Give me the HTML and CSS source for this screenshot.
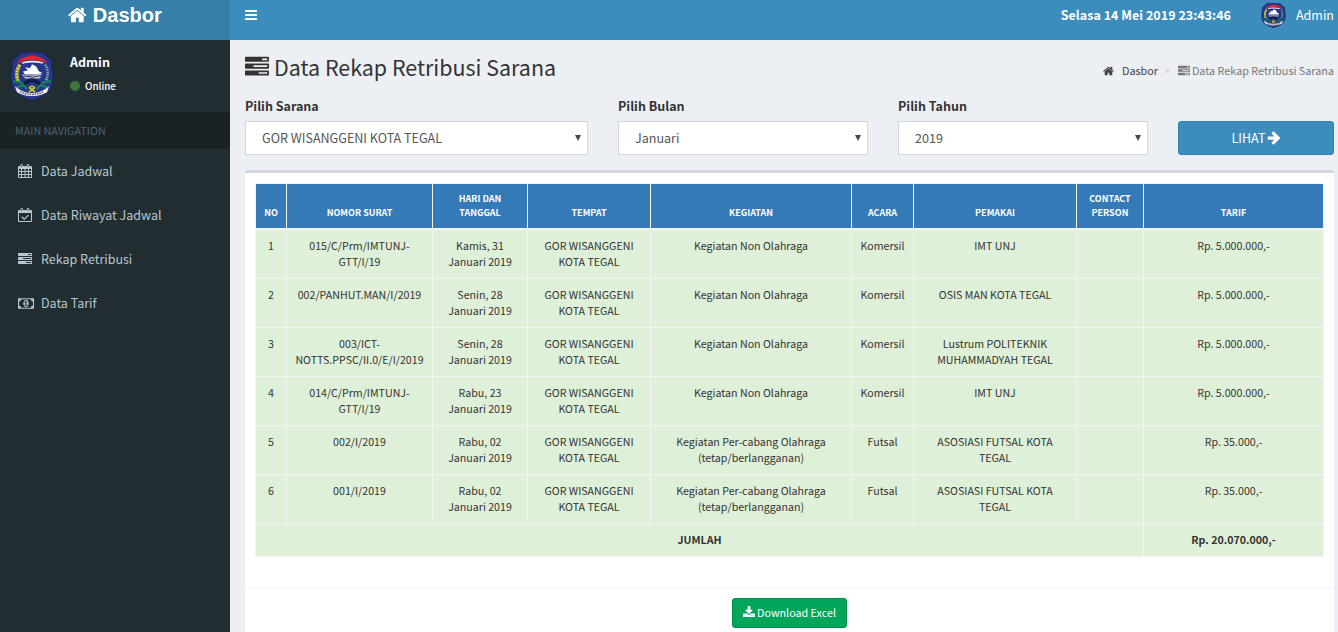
FILE: index.html
```html
<!DOCTYPE html>
<html lang="id">
<head>
<meta charset="utf-8">
<title>Data Rekap Retribusi Sarana</title>
<link rel="stylesheet" href="styles.css">
</head>
<body>
<svg class="sprite" aria-hidden="true">
  <symbol id="home" viewBox="64 0 1664 1792"><path d="M1472 992v480q0 26-19 45t-45 19h-384v-384h-256v384h-384q-26 0-45-19t-19-45v-480q0-1 .5-3t.5-3l575-474 575 474q1 2 1 6zm223-69l-62 74q-8 9-21 11h-3q-13 0-21-7l-692-577-692 577q-12 8-24 7-13-2-21-11l-62-74q-8-10-7-23.500t11-21.500l719-599q32-26 76-26t76 26l244 204v-195q0-14 9-23t23-9h192q14 0 23 9t9 23v408l219 182q10 8 11 21.500t-7 23.500z"/></symbol>
  <symbol id="bars" viewBox="128 0 1536 1792"><path d="M1664 1344v128q0 26-19 45t-45 19h-1408q-26 0-45-19t-19-45v-128q0-26 19-45t45-19h1408q26 0 45 19t19 45zm0-512v128q0 26-19 45t-45 19h-1408q-26 0-45-19t-19-45v-128q0-26 19-45t45-19h1408q26 0 45 19t19 45zm0-512v128q0 26-19 45t-45 19h-1408q-26 0-45-19t-19-45v-128q0-26 19-45t45-19h1408q26 0 45 19t19 45z"/></symbol>
  <symbol id="calendar" viewBox="0 0 14 14"><path fill-rule="evenodd" d="M1 2H2.500V1Q2.500 0 3.500 0Q4.800 0 4.800 1V2H8.800V1Q8.800 0 10 0Q11.200 0 11.200 1V2H13Q14 2 14 3V13Q14 14 13 14H1Q0 14 0 13V3Q0 2 1 2ZM1 5V7H3V5ZM4 5V7H6.500V5ZM7.500 5V7H10V5ZM11 5V7H13V5ZM1 8V10H3V8ZM4 8V10H6.500V8ZM7.500 8V10H10V8ZM11 8V10H13V8ZM1 11V13H3V11ZM4 11V13H6.500V11ZM7.500 11V13H10V11ZM11 11V13H13V11ZM3.300 1V3H4V1ZM9.700 1V3H10.400V1Z"/></symbol>
  <symbol id="calendar-check" viewBox="0 0 14 14"><path fill-rule="evenodd" d="M1 2H2.500V1Q2.500 0 3.500 0Q4.800 0 4.800 1V2H8.800V1Q8.800 0 10 0Q11.200 0 11.200 1V2H13Q14 2 14 3V13Q14 14 13 14H1Q0 14 0 13V3Q0 2 1 2ZM1 5V13H13V5ZM3.300 1V3H4V1ZM9.700 1V3H10.400V1Z"/><path d="M3.800 8.800L6.300 11.200L10.400 7.100" fill="none" stroke="currentColor" stroke-width="1.200"/></symbol>
  <symbol id="tasks" viewBox="0 0 1792 1792"><path d="M1024 1408h640v-128h-640v128zm-384-512h1024v-128h-1024v128zm640-512h384v-128h-384v128zm512 832v256q0 26-19 45t-45 19h-1664q-26 0-45-19t-19-45v-256q0-26 19-45t45-19h1664q26 0 45 19t19 45zm0-512v256q0 26-19 45t-45 19h-1664q-26 0-45-19t-19-45v-256q0-26 19-45t45-19h1664q26 0 45 19t19 45zm0-512v256q0 26-19 45t-45 19h-1664q-26 0-45-19t-19-45v-256q0-26 19-45t45-19h1664q26 0 45 19t19 45z"/></symbol>
  <symbol id="money" viewBox="0 0 1920 1792"><path d="M768 1152h384v-96h-128v-448h-114l-148 137 77 80q42-37 55-57h2v288h-128v96zm512-256q0 70-21 142t-59.500 134-101.500 101-138 39-138-39-101.500-101-59.500-134-21-142 21-142 59.500-134 101.500-101 138-39 138 39 101.500 101 59.500 134 21 142zm512 256v-512q-106 0-181-75t-75-181h-1152q0 106-75 181t-181 75v512q106 0 181 75t75 181h1152q0-106 75-181t181-75zm128-832v1152q0 26-19 45t-45 19h-1792q-26 0-45-19t-19-45v-1152q0-26 19-45t45-19h1792q26 0 45 19t19 45z"/></symbol>
  <symbol id="arrow" viewBox="64 0 1536 1792"><path d="M1600 960q0 54-37 91l-651 651q-39 37-91 37-51 0-90-37l-75-75q-38-38-38-91t38-91l293-293h-704q-52 0-84.500-37.500t-32.500-90.500v-128q0-53 32.500-90.500t84.500-37.500h704l-293-294q-38-36-38-90t38-90l75-75q38-38 90-38 53 0 91 38l651 651q37 35 37 90z"/></symbol>
  <symbol id="download" viewBox="64 0 1664 1792"><path d="M1344 1344q0-26-19-45t-45-19-45 19-19 45 19 45 45 19 45-19 19-45zm256 0q0-26-19-45t-45-19-45 19-19 45 19 45 45 19 45-19 19-45zm128-224v320q0 40-28 68t-68 28h-1472q-40 0-68-28t-28-68v-320q0-40 28-68t68-28h465l135 136q58 56 136 56t136-56l136-136h464q40 0 68 28t28 68zm-325-569q17 41-14 70l-448 448q-18 19-45 19t-45-19l-448-448q-31-29-14-70 17-39 59-39h256v-448q0-26 19-45t45-19h256q26 0 45 19t19 45v448h256q42 0 59 39z"/></symbol>
  <symbol id="crest" viewBox="0 0 44 50">
    <path d="M10 1Q22-1 34 1Q37 6 42 9Q41 15 43 22Q44 34 38 41Q32 46 22 49.500Q12 46 6 41Q0 34 1 22Q3 15 2 9Q7 6 10 1Z" fill="#27388c" stroke="#15205c" stroke-width=".8"/>
    <path d="M7 12Q9 6 16 5L22 3L28 5Q35 6 37 12L32 9.500Q22 7 12 9.500Z" fill="#e2242c"/>
    <path d="M12 10.500Q22 7.500 33 10.500V12Q22 9.500 12 12Z" fill="#f4ece8"/>
    <path d="M10 13Q5 20 8 30" fill="none" stroke="#d9cf35" stroke-width="3.500" stroke-dasharray="2.500 .6"/>
    <path d="M35 13Q40 20 36 29" fill="none" stroke="#86b9a0" stroke-width="2.500" stroke-dasharray="1.500 1"/>
    <path d="M13 20L18 18.500L15 15.500L20 16.500L22 12.500L26 14.500L29 20L32 21L28 23H15Z" fill="#fff"/>
    <path d="M12 22.500Q22 26 32 21.500L30 27H15Z" fill="#b8c0cc"/>
    <path d="M14 24.500Q22 27 31 24" fill="none" stroke="#333a54"/>
    <path d="M3 30Q12 29 17 38M41 30Q32 29 27 38M7 36L14 34M37 36L30 34" fill="none" stroke="#158750" stroke-width="2"/>
    <path d="M14 33Q22 25 30 33" fill="none" stroke="#101d45" stroke-width="3.500"/>
    <path d="M19 41L24.500 36.500Q22 33.500 19.500 36.500L25 41" fill="none" stroke="#e5cf22" stroke-width="1.600"/>
    <path d="M5 35L9 38Q22 46 35 38L39 35L37 41Q22 49 7 41Z" fill="#eee"/>
    <path d="M10 40.500Q22 46.500 34 40.500" fill="none" stroke="#555a68" stroke-width="1.500" stroke-dasharray="1.500 1"/>
  </symbol>
</svg>

<header class="topbar">
  <a class="brand"><svg class="icon w-home"><use href="#home"/></svg> Dasbor</a>
  <nav class="navbar">
    <svg class="icon w-bars toggle"><use href="#bars"/></svg>
    <span class="clock">Selasa 14 Mei 2019 23:43:46</span>
    <svg class="avatar-small" viewBox="0 0 44 50" preserveAspectRatio="none"><use href="#crest"/></svg>
    <span class="account">Admin</span>
  </nav>
</header>

<div class="wrapper">
  <aside class="sidebar">
    <div class="user-panel">
      <svg class="avatar" viewBox="0 0 44 50" preserveAspectRatio="none"><use href="#crest"/></svg>
      <div class="user-info">
        <div class="user-name">Admin</div>
        <div class="status"><i class="dot"></i>Online</div>
      </div>
    </div>
    <div class="nav-title">MAIN NAVIGATION</div>
    <a class="nav-item"><span class="nav-icon"><svg class="icon"><use href="#calendar"/></svg></span>Data Jadwal</a>
    <a class="nav-item"><span class="nav-icon"><svg class="icon"><use href="#calendar-check"/></svg></span>Data Riwayat Jadwal</a>
    <a class="nav-item"><span class="nav-icon"><svg class="icon"><use href="#tasks"/></svg></span>Rekap Retribusi</a>
    <a class="nav-item"><span class="nav-icon"><svg class="icon w-money"><use href="#money"/></svg></span>Data Tarif</a>
  </aside>

  <main class="content">
    <div class="page-head">
      <h1 class="title"><svg class="icon"><use href="#tasks"/></svg><span>Data Rekap Retribusi Sarana</span></h1>
      <div class="breadcrumb">
        <svg class="icon w-home crumb-home"><use href="#home"/></svg>
        <span class="crumb-link">Dasbor</span>
        <span class="crumb-sep">&gt;</span>
        <svg class="icon"><use href="#tasks"/></svg>
        <span class="crumb-here">Data Rekap Retribusi Sarana</span>
      </div>
    </div>

    <form class="filters">
      <label class="field"><span class="label">Pilih Sarana</span>
        <span class="select-box"><select class="select"><option>GOR WISANGGENI KOTA TEGAL</option></select><i class="caret"></i></span></label>
      <label class="field"><span class="label">Pilih Bulan</span>
        <span class="select-box"><select class="select"><option>Januari</option></select><i class="caret"></i></span></label>
      <label class="field"><span class="label">Pilih Tahun</span>
        <span class="select-box"><select class="select"><option>2019</option></select><i class="caret"></i></span></label>
      <button class="btn-view" type="button">LIHAT <svg class="icon w-bars"><use href="#arrow"/></svg></button>
    </form>

    <section class="box">
      <table class="table">
        <colgroup><col class="c1"><col class="c2"><col class="c3"><col class="c4"><col class="c5"><col class="c6"><col class="c7"><col class="c8"><col class="c9"></colgroup>
        <thead>
          <tr><th>NO</th><th>NOMOR SURAT</th><th>HARI DAN<br>TANGGAL</th><th>TEMPAT</th><th>KEGIATAN</th><th>ACARA</th><th>PEMAKAI</th><th>CONTACT<br>PERSON</th><th>TARIF</th></tr>
        </thead>
        <tbody>
          <tr><td>1</td><td>015/C/Prm/IMTUNJ-<br>GTT/I/19</td><td>Kamis, 31<br>Januari 2019</td><td>GOR WISANGGENI<br>KOTA TEGAL</td><td>Kegiatan Non Olahraga</td><td>Komersil</td><td>IMT UNJ</td><td></td><td>Rp. 5.000.000,-</td></tr>
          <tr><td>2</td><td>002/PANHUT.MAN/I/2019</td><td>Senin, 28<br>Januari 2019</td><td>GOR WISANGGENI<br>KOTA TEGAL</td><td>Kegiatan Non Olahraga</td><td>Komersil</td><td>OSIS MAN KOTA TEGAL</td><td></td><td>Rp. 5.000.000,-</td></tr>
          <tr><td>3</td><td>003/ICT-<br>NOTTS.PPSC/II.0/E/I/2019</td><td>Senin, 28<br>Januari 2019</td><td>GOR WISANGGENI<br>KOTA TEGAL</td><td>Kegiatan Non Olahraga</td><td>Komersil</td><td>Lustrum POLITEKNIK<br>MUHAMMADYAH TEGAL</td><td></td><td>Rp. 5.000.000,-</td></tr>
          <tr><td>4</td><td>014/C/Prm/IMTUNJ-<br>GTT/I/19</td><td>Rabu, 23<br>Januari 2019</td><td>GOR WISANGGENI<br>KOTA TEGAL</td><td>Kegiatan Non Olahraga</td><td>Komersil</td><td>IMT UNJ</td><td></td><td>Rp. 5.000.000,-</td></tr>
          <tr><td>5</td><td>002/I/2019</td><td>Rabu, 02<br>Januari 2019</td><td>GOR WISANGGENI<br>KOTA TEGAL</td><td>Kegiatan Per-cabang Olahraga<br>(tetap/berlangganan)</td><td>Futsal</td><td>ASOSIASI FUTSAL KOTA<br>TEGAL</td><td></td><td>Rp. 35.000,-</td></tr>
          <tr><td>6</td><td>001/I/2019</td><td>Rabu, 02<br>Januari 2019</td><td>GOR WISANGGENI<br>KOTA TEGAL</td><td>Kegiatan Per-cabang Olahraga<br>(tetap/berlangganan)</td><td>Futsal</td><td>ASOSIASI FUTSAL KOTA<br>TEGAL</td><td></td><td>Rp. 35.000,-</td></tr>
          <tr class="total"><td colspan="8">JUMLAH</td><td>Rp. 20.070.000,-</td></tr>
        </tbody>
      </table>
      <div class="box-footer">
        <button class="btn-excel" type="button"><svg class="icon w-home"><use href="#download"/></svg>Download Excel</button>
      </div>
    </section>
  </main>
</div>
</body>
</html>
```
FILE: styles.css
```css
* { box-sizing: border-box; }

html, body { height: 100%; }

body {
  margin: 0;
  overflow: hidden;
  background: #ecf0f5;
  color: #333;
  font-family: "Noto Sans CJK SC", "Noto Sans", sans-serif;
  font-size: 12.5px;
  line-height: 20px;
}

button, select { font-family: inherit; }

.sprite { position: absolute; width: 0; height: 0; }

.icon {
  width: 14px;
  height: 14px;
  flex: none;
  fill: currentColor;
}
.w-home { width: 13px; }
.w-bars { width: 12px; }
.w-money { width: 16px; height: 15px; }

/* Top bar */
.topbar { display: flex; height: 40px; color: #fff; }

.brand {
  display: flex;
  justify-content: center;
  width: 230px;
  padding-top: 5px;
  gap: 6px;
  background: #367fa9;
  font: bold 20px/20px "Liberation Sans", Arial, sans-serif;
}
.brand .icon { width: 18.600px; height: 20px; }

.navbar {
  display: flex;
  flex: 1;
  align-items: flex-start;
  padding: 5px 4px 0 15px;
  background: #3c8dbc;
}
.toggle { width: 12px; height: 14px; margin-top: 3px; }
.clock { margin-left: auto; font-size: 12.550px; font-weight: bold; }
.avatar-small { width: 25px; height: 25px; margin: -2px 10px 0 30px; }

/* Sidebar */
.wrapper { display: flex; height: calc(100% - 40px); }

.sidebar { width: 230px; background: #222d32; color: #b8c7ce; }

.user-panel { display: flex; height: 72px; padding: 12px 10px; color: #fff; }
.avatar { width: 44px; height: 49px; margin-right: 1px; }
.user-info { padding-left: 15px; }
.user-name { font-weight: bold; }
.status { display: flex; align-items: center; margin-top: 4px; font-size: 9.800px; font-weight: 500; }
.dot { width: 10px; height: 10px; margin-right: 5px; border-radius: 50%; background: #3c763d; }

.nav-title { height: 37px; padding: 9px 15px; background: #1a2226; color: #4b646f; font-size: 10.750px; }

.nav-item { display: flex; align-items: center; height: 44px; padding-left: 18px; }
.nav-icon { display: flex; width: 23px; }

/* Content */
.content { display: flex; flex: 1; flex-direction: column; padding: 0 4px 0 15px; }

.page-head { display: flex; justify-content: space-between; height: 56px; padding-top: 13px; }
.title { display: flex; gap: 5px; margin: 0; font-size: 21.450px; font-weight: 400; line-height: 28px; }
.title .icon { width: 24px; height: 24px; margin-top: 2px; }

.breadcrumb { display: flex; align-items: center; height: 35px; font-size: 10.800px; color: #777; }
.breadcrumb .icon { width: 12px; height: 12px; }
.breadcrumb .crumb-home { width: 11px; margin-right: 8px; color: #444; }
.crumb-link { color: #444; }
.crumb-sep { padding: 0 8px 0 6px; color: #ccc; }
.crumb-here { padding-left: 2px; }
.crumb-link, .crumb-sep, .crumb-here { line-height: 19px; }

.filters { display: grid; grid-template-columns: 343px 250px 250px 156px; column-gap: 30px; align-items: end; height: 59px; }
.label { display: block; height: 25px; font-weight: bold; line-height: 19px; }
.select-box { position: relative; display: block; }
.select {
  display: block;
  width: 100%;
  height: 34px;
  padding: 0 16px 2px;
  appearance: none;
  border: 1px solid #d2d6de;
  border-radius: 0;
  background: #fff;
  color: #555;
  font-size: 12.550px;
}
.caret {
  position: absolute;
  top: 14px;
  right: 7px;
  border: 3px solid transparent;
  border-top: 6px solid #444;
  border-bottom: 0;
}
.btn-view {
  display: flex;
  align-items: center;
  justify-content: center;
  gap: 2px;
  height: 34px;
  padding-bottom: 2px;
  border: 1px solid #367fa9;
  border-radius: 3px;
  background: #3c8dbc;
  color: #fff;
  font-size: 12.500px;
}
.btn-view .icon { width: 13px; height: 15px; }

/* Report box */
.box {
  flex: 1;
  margin-top: 15px;
  padding-top: 10px;
  border-top: 3px solid #d2d6de;
  border-radius: 3px 3px 0 0;
  background: #fff;
  box-shadow: 0 1px 1px rgba(0, 0, 0, .1);
}

.table {
  width: 1069px;
  margin-left: 10px;
  table-layout: fixed;
  border-spacing: 0;
  border-collapse: separate;
  border-top: 1px solid #f4f4f4;
  font-size: 10.650px;
  line-height: 16px;
  text-align: center;
}
.c1 { width: 32px; }
.c2 { width: 146px; }
.c3 { width: 95px; }
.c4 { width: 123px; }
.c5 { width: 201px; }
.c6 { width: 62px; }
.c7 { width: 163px; }
.c8 { width: 67px; }
.c9 { width: 180px; }

.table th, .table td { padding: 0; border-right: 1px solid #f4f4f4; border-bottom: 1px solid #f4f4f4; white-space: nowrap; }
.table th:first-child, .table td:first-child { border-left: 1px solid #f4f4f4; }
.table th {
  height: 46px;
  padding-bottom: 8px;
  border-bottom-width: 2px;
  background: #337ab7;
  color: #fff;
  font-size: 9px;
  line-height: 14px;
  vertical-align: bottom;
}
.table td { height: 49px; padding-top: 8px; background: #dff0d8; vertical-align: top; }
.table .total td { height: 33px; font-weight: bold; }

.box-footer { display: flex; justify-content: center; margin-top: 30px; padding-top: 10px; border-top: 1px solid #f4f4f4; }
.btn-excel {
  display: flex;
  align-items: center;
  gap: 2px;
  height: 30px;
  padding: 0 10px 2px;
  border: 1px solid #008d4c;
  border-radius: 3px;
  background: #00a65a;
  color: #fff;
  font-size: 10.750px;
}
.btn-excel .icon { width: 12px; height: 13px; }
```
